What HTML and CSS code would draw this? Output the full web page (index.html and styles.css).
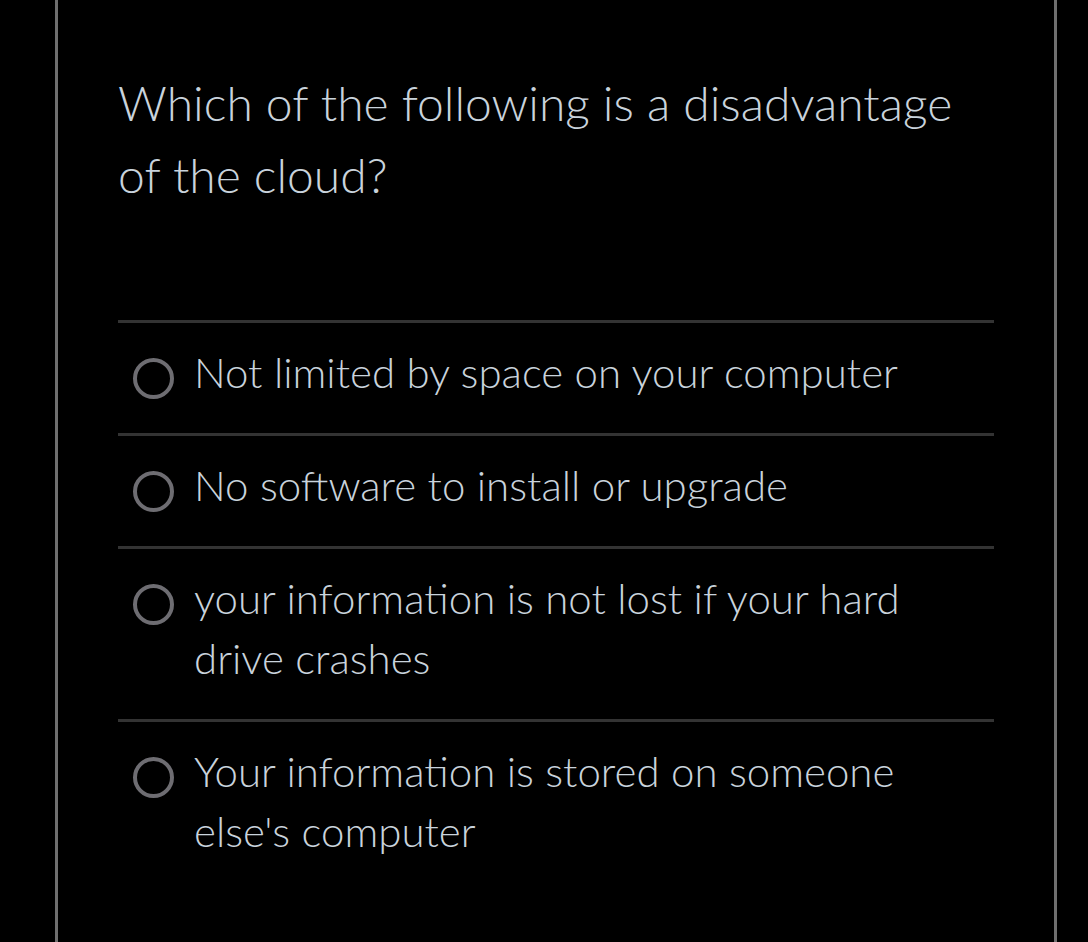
FILE: index.html
```html
<!DOCTYPE html>
<html lang="en">
<head>
<meta charset="utf-8">
<title>Quiz question</title>
<link rel="stylesheet" href="styles.css">
</head>
<body>
<div class="frame">
  <div class="question">
    <p class="prompt">Which of the following is a disadvantage of the cloud?</p>
    <ul class="answers">
      <li class="answer"><span class="radio"></span><span class="label">Not limited by space on your computer</span></li>
      <li class="answer"><span class="radio"></span><span class="label">No software to install or upgrade</span></li>
      <li class="answer"><span class="radio"></span><span class="label">your information is not lost if your hard drive crashes</span></li>
      <li class="answer"><span class="radio"></span><span class="label">Your information is stored on someone else's computer</span></li>
    </ul>
  </div>
</div>
</body>
</html>
```

FILE: styles.css
```css
html, body {
  margin: 0;
  padding: 0;
  background: #000;
}
body {
  font-family: "Lato Light", Lato, "Open Sans", "Liberation Sans", sans-serif;
  font-weight: 300;
  color: #c9d3dc;
  height: 942px;
  overflow: hidden;
}
.frame {
  margin-left: 55px;
  width: 996px;
  height: 942px;
  border-left: 3px solid #6f6f6f;
  border-right: 3px solid #6f6f6f;
}
.question {
  padding: 67px 60px 0 60px;
}
.prompt {
  margin: 0;
  font-size: 48px;
  line-height: 72px;
  width: 860px;
}
.answers {
  list-style: none;
  margin: 109px 0 0 0;
  padding: 0;
}
.answer {
  display: flex;
  align-items: flex-start;
  border-top: 3px solid #333333;
  padding: 19px 0 31px 15px;
}
.radio {
  flex: none;
  box-sizing: border-box;
  width: 41px;
  height: 41px;
  border: 4px solid #6e6d72;
  border-radius: 50%;
  margin-top: 16px;
  margin-right: 20px;
}
.label {
  font-size: 42px;
  line-height: 60px;
  max-width: 740px;
}
```
